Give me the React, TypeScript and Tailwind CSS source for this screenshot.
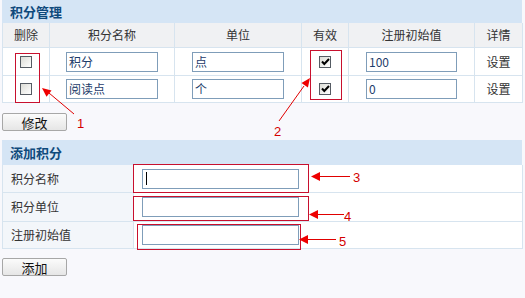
import React from "react";

const font = { fontFamily: '"Noto Sans CJK SC", "Liberation Sans", sans-serif' };

function Checkbox({ checked }: { checked?: boolean }) {
  return (
    <div className="w-[12px] h-[12px] border border-[#555b63] bg-gradient-to-br from-[#dcdcd6] to-[#ffffff] flex items-center justify-center">
      {checked && (
        <svg width="9" height="8" viewBox="0 0 9 8">
          <path d="M1 3.5 L3.3 6 L8 1" stroke="#000" strokeWidth="2" fill="none" />
        </svg>
      )}
    </div>
  );
}

function Input({ value, w, cursor }: { value?: string; w: string; cursor?: boolean }) {
  return (
    <div className={`${w} h-[20px] border border-[#7f9db9] bg-white flex items-center pl-[2px] text-[12px] text-[#1d3c6a] leading-none relative`}>
      {value}
      {cursor && <div className="w-[1px] h-[13px] bg-black ml-[1px]" />}
    </div>
  );
}

function Button({ label }: { label: string }) {
  return (
    <div className="w-[65px] h-[18px] border border-[#a7a7a7] rounded-[2px] bg-gradient-to-b from-[#fbfbfb] to-[#e6e6e6] flex items-center justify-center text-[13px] text-[#111] leading-none">
      {label}
    </div>
  );
}

const cellB = "border-r border-b border-[#d7e4ef] flex items-center justify-center";

export default function App() {
  const rows = [
    { name: "积分", unit: "点", init: "100" },
    { name: "阅读点", unit: "个", init: "0" },
  ];
  return (
    <div className="relative w-[525px] h-[298px] bg-[#f8f8fc] overflow-hidden" style={font}>
      <div className="pl-[2px] w-[522px]">
        {/* Section 1 */}
        <div className="h-[23px] bg-[#d5e5f5] flex items-center pl-[8px] text-[13px] font-bold text-[#0f4a7c]">积分管理</div>
        <div className="grid grid-cols-[47px_125px_127px_47px_126px_48px] border-l border-[#d7e4ef] text-[12px] text-[#333]">
          {["删除", "积分名称", "单位", "有效", "注册初始值", "详情"].map((h) => (
            <div key={h} className={`${cellB} h-[25px] bg-[#f0f1f3]`}>{h}</div>
          ))}
          {rows.map((r, i) => (
            <React.Fragment key={i}>
              <div className={`${cellB} ${i === 0 ? "h-[28px]" : "h-[27px]"} bg-white`}><Checkbox /></div>
              <div className={`${cellB} bg-white`}><Input value={r.name} w="w-[92px]" /></div>
              <div className={`${cellB} bg-white justify-start pl-[17px]`}><Input value={r.unit} w="w-[92px]" /></div>
              <div className={`${cellB} bg-white`}><Checkbox checked /></div>
              <div className={`${cellB} bg-white`}><Input value={r.init} w="w-[91px]" /></div>
              <div className={`${cellB} bg-white text-[12px]`}>设置</div>
            </React.Fragment>
          ))}
        </div>
        <div className="pt-[10px] h-[37px]">
          <Button label="修改" />
        </div>

        {/* Section 2 */}
        <div className="h-[25px] bg-[#d5e5f5] flex items-center pl-[8px] text-[13px] font-bold text-[#0f4a7c]">添加积分</div>
        <div className="grid grid-cols-[131px_389px] border-l border-[#d7e4ef] text-[12px] text-[#333]">
          {[
            { label: "积分名称", cursor: true, h: "h-[28px]" },
            { label: "积分单位", cursor: false, h: "h-[29px]" },
            { label: "注册初始值", cursor: false, h: "h-[27px]" },
          ].map((r) => (
            <React.Fragment key={r.label}>
              <div className={`${cellB} ${r.h} bg-[#f3f6fa] justify-start pl-[8px]`}>{r.label}</div>
              <div className={`${cellB} bg-white justify-start pl-[8px]`}>
                <Input w="w-[157px]" cursor={r.cursor} />
              </div>
            </React.Fragment>
          ))}
        </div>
        <div className="pt-[9px]">
          <Button label="添加" />
        </div>
      </div>

      {/* annotations */}
      <svg className="absolute left-0 top-0 pointer-events-none" width="525" height="298">
        <g stroke="#c8102e" fill="none" strokeWidth="1">
          <rect x="15.5" y="53.5" width="24" height="49" />
          <rect x="310.5" y="50.5" width="31" height="49" />
          <rect x="133.5" y="164.5" width="175" height="28" />
          <rect x="133.5" y="196.5" width="175" height="24" />
          <rect x="137.5" y="224.5" width="163" height="25" />
        </g>
        <g stroke="#e00000" strokeWidth="1" fill="#ee0000">
          <line x1="49" y1="93" x2="74" y2="114" />
          <polygon points="42,88 51.5,90.6 46.5,96.8" stroke="none" />
          <line x1="304" y1="86" x2="279" y2="121" />
          <polygon points="310,78 307.9,87.6 301.5,83" stroke="none" />
          <line x1="318" y1="176.5" x2="350" y2="176.5" />
          <polygon points="311,176.5 320,172 320,181" stroke="none" />
          <line x1="316" y1="214.5" x2="344" y2="214.5" />
          <polygon points="309,214.5 318,210 318,219" stroke="none" />
          <line x1="306" y1="239.5" x2="336" y2="239.5" />
          <polygon points="299,239.5 308,235 308,244" stroke="none" />
        </g>
        <g fill="#d40000" fontSize="13" fontFamily="Liberation Sans, sans-serif">
          <text x="77" y="128">1</text>
          <text x="274" y="136">2</text>
          <text x="353" y="182">3</text>
          <text x="344" y="221">4</text>
          <text x="339" y="246">5</text>
        </g>
      </svg>
    </div>
  );
}
